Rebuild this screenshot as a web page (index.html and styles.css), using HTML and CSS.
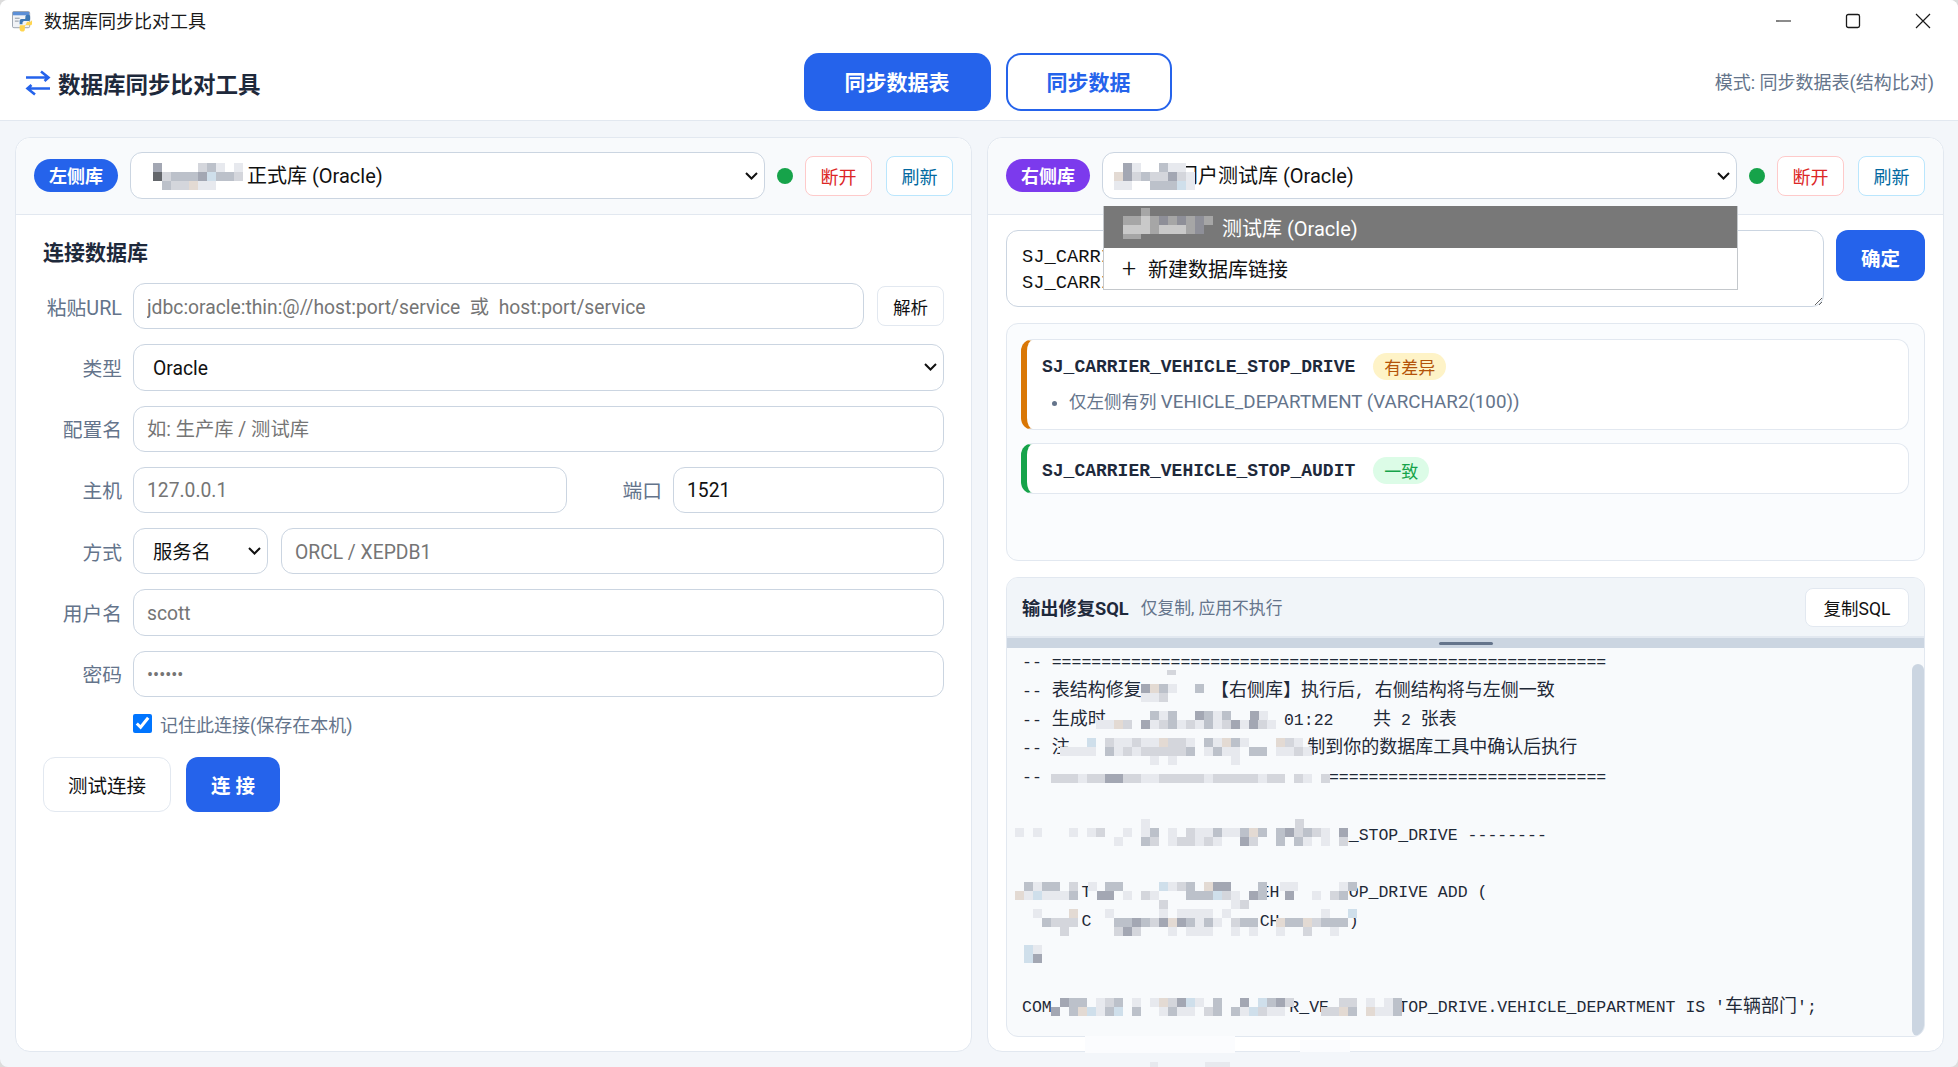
FILE: index.html
```html
<!DOCTYPE html>
<html lang="zh-CN">
<head>
<meta charset="utf-8">
<title>数据库同步比对工具</title>
<link rel="stylesheet" href="styles.css">
</head>
<body>
<div class="window">
  <div class="titlebar">
    <svg class="app-icon" viewBox="0 0 22 22" aria-hidden="true">
      <rect x="0.5" y="0.5" width="18" height="17" rx="1.5" fill="#f1f3f6" stroke="#9aa3ad"/>
      <rect x="1" y="1" width="17" height="3.5" fill="#5c8fd6"/>
      <rect x="3" y="7" width="5" height="1.2" fill="#9aa3ad"/>
      <rect x="3" y="10" width="4" height="1.2" fill="#9aa3ad"/>
      <path d="M8 14v-3.5c0-1.2.9-2 2-2h3c.8 0 1-.6 1-1.2V6c0-1.2 1-2 2.200-2h.6C18.600 4 19 5 19 6v2.600c0 1-.8 1.900-2 1.900h-4c-1.100 0-2 .8-2 2V14z" fill="#3d78b4"/>
      <path d="M21 9v4c0 1.300-.8 2-2 2h-4c-.8 0-1.500.5-1.500 1.300V19c0 1.600-1 2.500-2.200 2.500h-1c-1.300 0-2.300-1-2.300-2.300V16c0-.8.500-1.100 1.300-1.100H13c1.300 0 2-.9 2-2 0-1 1-1.700 2-1.700h2c1 0 2-1 2-2.200z" fill="#ffd54f"/>
    </svg>
    <span class="app-name">数据库同步比对工具</span>
    <div class="win-controls">
      <svg class="win-btn" viewBox="0 0 16 16" aria-hidden="true"><path d="M1 8h15" stroke="#1a1a1a" stroke-width="1.100" fill="none"/></svg>
      <svg class="win-btn" viewBox="0 0 16 16" aria-hidden="true"><rect x="1.500" y="1.500" width="13" height="13" rx="1.800" stroke="#1a1a1a" stroke-width="1.300" fill="none"/></svg>
      <svg class="win-btn" viewBox="0 0 16 16" aria-hidden="true"><path d="M1 1l14 14M15 1L1 15" stroke="#1a1a1a" stroke-width="1.200" fill="none"/></svg>
    </div>
  </div>

  <header class="topbar">
    <div class="brand">
      <svg class="brand-icon" viewBox="0 0 26 26" aria-hidden="true">
        <path d="M1 7.500h22M16 1.500l7.500 6-4 3.500M25 18.500H3M10 24.500l-7.500-6 4-3.500" stroke="#2563eb" stroke-width="2.600" fill="none"/>
      </svg>
      <span class="brand-name">数据库同步比对工具</span>
    </div>
    <nav class="tabs">
      <button class="tab tab-active">同步数据表</button>
      <button class="tab tab-idle">同步数据</button>
    </nav>
    <div class="mode">模式: 同步数据表(结构比对)</div>
  </header>

  <main class="panels">
    <section class="panel">
      <div class="panel-bar">
        <span class="side-badge side-left">左侧库</span>
        <div class="select-wrap">
          <select class="conn-select conn-left"><option>正式库 (Oracle)</option></select>
        </div>
        <span class="status-dot"></span>
        <button class="mini-btn btn-danger">断开</button>
        <button class="mini-btn btn-info">刷新</button>
      </div>
      <div class="panel-body form-body">
        <h2 class="form-title">连接数据库</h2>
        <div class="form-row">
          <label class="form-label">粘贴URL</label>
          <input class="field grow" placeholder="jdbc:oracle:thin:@//host:port/service  或  host:port/service">
          <button class="parse-btn">解析</button>
        </div>
        <div class="form-row">
          <label class="form-label">类型</label>
          <select class="field grow field-select"><option>Oracle</option></select>
        </div>
        <div class="form-row">
          <label class="form-label">配置名</label>
          <input class="field grow" placeholder="如: 生产库 / 测试库">
        </div>
        <div class="form-row">
          <label class="form-label">主机</label>
          <input class="field host" placeholder="127.0.0.1">
          <label class="port-label">端口</label>
          <input class="field grow" value="1521">
        </div>
        <div class="form-row">
          <label class="form-label">方式</label>
          <select class="field field-select method"><option>服务名</option></select>
          <input class="field grow" placeholder="ORCL / XEPDB1">
        </div>
        <div class="form-row">
          <label class="form-label">用户名</label>
          <input class="field grow" placeholder="scott">
        </div>
        <div class="form-row">
          <label class="form-label">密码</label>
          <input class="field grow pass" placeholder="••••••">
        </div>
        <label class="remember"><input type="checkbox" class="remember-box" checked><span>记住此连接(保存在本机)</span></label>
        <div class="form-actions">
          <button class="btn-test">测试连接</button>
          <button class="btn-connect">连 接</button>
        </div>
      </div>
    </section>

    <section class="panel">
      <div class="panel-bar">
        <span class="side-badge side-right">右侧库</span>
        <div class="select-wrap">
          <select class="conn-select conn-right"><option>门户测试库 (Oracle)</option></select>
          <div class="dropdown">
            <div class="dropdown-item dropdown-current">测试库 (Oracle)</div>
            <div class="dropdown-item"><span class="plus">+</span>新建数据库链接</div>
          </div>
        </div>
        <span class="status-dot"></span>
        <button class="mini-btn btn-danger">断开</button>
        <button class="mini-btn btn-info">刷新</button>
      </div>
      <div class="panel-body compare-body">
        <div class="table-input">
          <textarea class="tables" spellcheck="false">SJ_CARRIER_VEHICLE_STOP_DRIVE
SJ_CARRIER_VEHICLE_STOP_AUDIT</textarea>
          <button class="btn-confirm">确定</button>
        </div>
        <div class="results">
          <article class="result result-diff">
            <div class="result-head"><span class="result-name">SJ_CARRIER_VEHICLE_STOP_DRIVE</span><span class="tag tag-diff">有差异</span></div>
            <ul class="result-list"><li>仅左侧有列 <span class="result-latin">VEHICLE_DEPARTMENT (VARCHAR2(100))</span></li></ul>
          </article>
          <article class="result result-same">
            <div class="result-head"><span class="result-name">SJ_CARRIER_VEHICLE_STOP_AUDIT</span><span class="tag tag-same">一致</span></div>
          </article>
        </div>
        <div class="output">
          <div class="output-head">
            <strong class="output-title">输出修复SQL</strong>
            <span class="output-sub">仅复制, 应用不执行</span>
            <button class="btn-copy">复制SQL</button>
          </div>
          <div class="splitter"><span class="grip"></span></div>
          <div class="sql-wrap">
<pre class="sql">-- ========================================================
-- <span class="zh">表结构修复</span>       <span class="zh">【右侧库】执行后</span>, <span class="zh">右侧结构将与左侧一致</span>
-- <span class="zh">生成时</span>                  01:22    <span class="zh">共</span> 2 <span class="zh">张表</span>
-- <span class="zh">注</span>                        <span class="zh">制到你的数据库工具中确认后执行</span>
--                             ============================

                                 _STOP_DRIVE --------

      T                 EH       OP_DRIVE ADD (
      C                 CH       )


COM                        R_VE       TOP_DRIVE.VEHICLE_DEPARTMENT IS '<span class="zh">车辆部门</span>';</pre>
            <span class="sql-scroll"></span>
          </div>
        </div>
      </div>
    </section>
  </main>

  <svg class="mosaic" viewBox="0 0 1958 1067" aria-hidden="true" shape-rendering="crispEdges">
    <path fill="#fbfcfe" d="M1085 1036h150v17h-150zM1300 1040h50v12h-50z"/>
    <path fill="#e7e9ee" d="M1150 1062h8v5h-8zM1205 1062h25v5h-25zM1168 684h9v9h-9zM1141 693h18v9h-18zM1159 711h9v9h-9zM1213 711h9v9h-9zM1259 711h9v9h-9zM1096 720h18v9h-18zM1150 720h9v9h-9zM1177 720h9v9h-9zM1195 720h9v9h-9zM1213 720h9v9h-9zM1240 720h9v9h-9zM1267 720h9v9h-9zM1114 738h18v9h-18zM1141 738h18v9h-18zM1186 738h9v9h-9zM1213 738h9v9h-9zM1240 738h9v9h-9zM1294 738h9v9h-9zM1060 747h36v9h-36zM1114 747h9v9h-9zM1132 747h9v9h-9zM1204 747h9v9h-9zM1222 747h18v9h-18zM1276 747h18v9h-18zM1303 747h9v9h-9zM1150 756h9v9h-9zM1168 756h9v9h-9zM1231 756h9v9h-9zM1078 774h9v9h-9zM1141 774h18v9h-18zM1204 774h9v9h-9zM1258 774h9v9h-9zM1303 774h9v9h-9zM1141 819h9v9h-9zM1015 828h9v9h-9zM1033 828h9v9h-9zM1069 828h9v9h-9zM1087 828h9v9h-9zM1123 828h9v9h-9zM1141 828h9v9h-9zM1168 828h9v9h-9zM1195 828h18v9h-18zM1222 828h18v9h-18zM1321 828h9v9h-9zM1114 837h9v9h-9zM1168 837h9v9h-9zM1195 837h9v9h-9zM1213 837h9v9h-9zM1303 837h9v9h-9zM1321 837h9v9h-9zM1033 882h9v9h-9zM1088 882h9v9h-9zM1168 882h9v9h-9zM1280 882h18v9h-18zM1339 882h9v9h-9zM1024 891h9v9h-9zM1042 891h27v9h-27zM1123 891h9v9h-9zM1150 891h9v9h-9zM1231 891h9v9h-9zM1312 891h9v9h-9zM1231 900h9v9h-9zM1033 909h9v9h-9zM1105 909h9v9h-9zM1159 909h9v9h-9zM1177 909h36v9h-36zM1222 909h9v9h-9zM1321 909h9v9h-9zM1195 918h9v9h-9zM1213 918h9v9h-9zM1168 927h9v9h-9zM1186 927h27v9h-27zM1231 927h9v9h-9zM1249 927h9v9h-9zM1276 927h9v9h-9zM1330 927h9v9h-9zM1033 945h9v9h-9zM1096 998h9v9h-9zM1132 998h9v9h-9zM1150 998h9v9h-9zM1195 998h9v9h-9zM1366 998h9v9h-9zM1384 998h9v9h-9zM1096 1007h9v9h-9zM1159 1007h9v9h-9zM1177 1007h18v9h-18zM1240 1007h9v9h-9zM1267 1007h18v9h-18zM1375 1007h18v9h-18zM216 163h9v9h-9zM234 163h9v9h-9zM198 181h18v9h-18zM1132 163h9v9h-9zM1168 163h18v9h-18zM1186 172h9v9h-9zM1114 181h18v9h-18zM1186 181h9v9h-9z"/>
    <path fill="#d4d6dc" d="M1167 670h9v5h-9zM1159 693h9v9h-9zM1123 720h9v9h-9zM1159 720h9v9h-9zM1186 720h9v9h-9zM1222 720h9v9h-9zM1258 720h9v9h-9zM1105 738h9v9h-9zM1132 738h9v9h-9zM1168 738h18v9h-18zM1285 738h9v9h-9zM1123 747h9v9h-9zM1141 747h45v9h-45zM1294 747h9v9h-9zM1051 774h27v9h-27zM1087 774h18v9h-18zM1123 774h18v9h-18zM1159 774h45v9h-45zM1213 774h45v9h-45zM1267 774h18v9h-18zM1294 774h9v9h-9zM1321 774h9v9h-9zM1295 819h9v9h-9zM1096 828h9v9h-9zM1186 828h9v9h-9zM1294 828h9v9h-9zM1312 828h9v9h-9zM1150 837h9v9h-9zM1177 837h18v9h-18zM1204 837h9v9h-9zM1249 837h9v9h-9zM1339 837h9v9h-9zM1069 882h9v9h-9zM1177 882h9v9h-9zM1141 891h9v9h-9zM1222 891h9v9h-9zM1330 891h9v9h-9zM1159 900h9v9h-9zM1240 900h9v9h-9zM1051 918h27v9h-27zM1150 918h9v9h-9zM1231 918h9v9h-9zM1312 918h9v9h-9zM1060 927h9v9h-9zM1114 927h9v9h-9zM1132 927h9v9h-9zM1303 927h9v9h-9zM1105 998h9v9h-9zM1168 998h9v9h-9zM1285 998h9v9h-9zM1339 998h18v9h-18zM1204 1007h9v9h-9zM1258 1007h9v9h-9zM1321 1007h18v9h-18zM198 163h9v9h-9zM162 172h9v9h-9zM234 172h9v9h-9zM171 181h18v9h-18zM1132 172h9v9h-9zM1150 172h18v9h-18zM1177 172h9v9h-9z"/>
    <path fill="#bcc1ca" d="M1159 684h9v9h-9zM1195 684h9v9h-9zM1150 711h9v9h-9zM1168 711h9v9h-9zM1204 711h9v9h-9zM1222 711h9v9h-9zM1168 720h9v9h-9zM1204 720h9v9h-9zM1204 738h9v9h-9zM1231 738h9v9h-9zM1105 747h9v9h-9zM1186 747h9v9h-9zM1213 747h9v9h-9zM1249 747h18v9h-18zM1150 828h9v9h-9zM1213 828h9v9h-9zM1240 828h9v9h-9zM1258 828h9v9h-9zM1276 828h9v9h-9zM1303 828h9v9h-9zM1141 837h9v9h-9zM1276 837h9v9h-9zM1294 837h9v9h-9zM1024 882h9v9h-9zM1042 882h18v9h-18zM1105 882h18v9h-18zM1186 882h9v9h-9zM1258 882h9v9h-9zM1348 882h9v9h-9zM1069 891h9v9h-9zM1186 891h27v9h-27zM1258 891h9v9h-9zM1339 891h9v9h-9zM1042 918h9v9h-9zM1114 918h18v9h-18zM1141 918h9v9h-9zM1186 918h9v9h-9zM1204 918h9v9h-9zM1240 918h18v9h-18zM1285 918h18v9h-18zM1321 918h27v9h-27zM1069 998h18v9h-18zM1114 998h9v9h-9zM1213 998h9v9h-9zM1267 998h9v9h-9zM1393 998h9v9h-9zM1069 1007h9v9h-9zM1105 1007h9v9h-9zM1132 1007h9v9h-9zM1168 1007h9v9h-9zM1213 1007h9v9h-9zM1231 1007h9v9h-9zM1348 1007h9v9h-9zM1393 1007h9v9h-9zM207 163h9v9h-9zM171 172h27v9h-27zM216 172h18v9h-18zM162 181h9v9h-9zM1159 163h9v9h-9zM1141 172h9v9h-9zM1150 181h27v9h-27z"/>
    <path fill="#a3a7b3" d="M1141 684h9v9h-9zM1195 711h9v9h-9zM1250 711h9v9h-9zM1141 720h9v9h-9zM1231 720h9v9h-9zM1249 720h9v9h-9zM1105 774h18v9h-18zM1285 828h9v9h-9zM1339 828h9v9h-9zM1240 837h9v9h-9zM1213 882h18v9h-18zM1097 891h17v9h-17zM1249 891h9v9h-9zM1285 891h9v9h-9zM1132 918h9v9h-9zM1159 918h9v9h-9zM1177 918h9v9h-9zM1123 927h9v9h-9zM1033 954h9v9h-9zM1060 998h9v9h-9zM1177 998h9v9h-9zM1240 998h9v9h-9zM1276 998h9v9h-9zM1051 1007h9v9h-9zM153 163h9v9h-9zM198 172h9v9h-9zM1123 163h9v9h-9zM1123 172h9v9h-9zM1168 172h9v9h-9z"/>
    <path fill="#cfdfeb" d="M1087 738h9v9h-9zM1159 882h9v9h-9zM1033 891h9v9h-9zM1213 891h9v9h-9zM1348 909h9v9h-9zM1024 945h9v18h-9zM1186 998h9v9h-9zM1258 998h9v9h-9zM1087 1007h9v9h-9zM1114 1007h9v9h-9zM1249 1007h9v9h-9zM207 172h9v9h-9zM1177 181h9v9h-9z"/>
    <path fill="#e3dad3" d="M1150 684h9v9h-9zM1114 720h9v9h-9zM1159 738h9v9h-9zM1222 738h9v9h-9zM1276 738h9v9h-9zM1249 828h9v9h-9zM1204 882h9v9h-9zM1015 891h9v9h-9zM1069 909h9v9h-9zM1168 918h9v9h-9zM1276 918h9v9h-9zM1303 918h9v9h-9zM1159 998h9v9h-9zM1078 1007h9v9h-9zM1339 1007h9v9h-9zM1366 1007h9v9h-9zM189 181h9v9h-9zM1114 172h9v9h-9z"/>
    <path fill="#63666b" d="M153 172h9v9h-9z"/>
    <path fill="#a6a6a6" d="M1123 216h9v9h-9zM1132 216h9v9h-9zM1150 216h9v9h-9zM1168 216h9v9h-9zM1186 216h9v9h-9zM1204 216h9v9h-9zM1150 225h9v9h-9zM1186 225h9v9h-9zM1123 234h18v5h-18zM1141 208h9v8h-9z"/>
    <path fill="#c9c9c9" d="M1141 216h9v9h-9zM1123 225h27v9h-27zM1159 225h18v9h-18zM1177 225h9v9h-9z"/>
    <path fill="#8e8f98" d="M1159 216h9v9h-9zM1177 216h9v9h-9zM1195 216h9v9h-9zM1195 225h9v9h-9z"/>
  </svg>
</div>
</body>
</html>
```
FILE: styles.css
```css
* { box-sizing: border-box; }
html, body { margin: 0; height: 100%; }
body {
  background: #dcdcdc;
  font-family: Roboto, "Noto Sans CJK SC", sans-serif;
  color: #111827;
  overflow: hidden;
}
button, input, select, textarea { font-family: inherit; }
.window {
  position: relative;
  width: 1958px;
  height: 1067px;
  display: flex;
  flex-direction: column;
  background: #f3f6fa;
  border-radius: 8px;
  overflow: hidden;
}
.titlebar {
  height: 42px;
  background: #fff;
  display: flex;
  align-items: center;
  padding: 0 0 0 12px;
}
.app-icon { width: 21px; height: 21px; margin-right: 11px; }
.app-name { font-size: 18px; color: #1a1a1a; margin-top: -3px; }
.win-controls { margin-left: auto; display: flex; gap: 54px; padding-right: 27px; }
.win-btn { width: 16px; height: 16px; }
.topbar {
  height: 79px;
  background: #fff;
  border-bottom: 1px solid #e2e8f0;
  display: grid;
  grid-template-columns: 1fr auto 1fr;
  align-items: center;
  padding: 0 24px 0 25px;
}
.brand { display: flex; align-items: center; gap: 7px; padding-top: 4px; }
.brand-icon { width: 26px; height: 26px; }
.brand-name { font-size: 22.500px; font-weight: 700; color: #1e293b; }
.tabs { display: flex; gap: 15px; margin-left: 16px; padding-top: 2px; }
.tab {
  height: 58px;
  border-radius: 15px;
  font-size: 21px;
  font-weight: 700;
  padding-bottom: 3px;
}
.tab-active { width: 187px; background: #2563eb; color: #fff; border: 0; }
.tab-idle { width: 166px; background: #fff; color: #2563eb; border: 2px solid #2563eb; }
.mode { text-align: right; font-size: 18px; color: #64748b; padding-bottom: 1px; }
.panels {
  flex: 1;
  display: grid;
  grid-template-columns: 957px 957px;
  gap: 15px;
  padding: 16px 0 15px 15px;
  min-height: 0;
}
.panel {
  background: #fff;
  border: 1px solid #e2e8f0;
  border-radius: 15px;
  display: flex;
  flex-direction: column;
  min-height: 0;
}
.panel-bar {
  height: 77px;
  flex: none;
  background: #f8fafc;
  border-bottom: 1px solid #e2e8f0;
  border-radius: 15px 15px 0 0;
  display: flex;
  align-items: center;
  padding: 0 18px 1px;
  gap: 12px;
}
.side-badge {
  flex: none;
  height: 33px;
  width: 84px;
  border-radius: 17px;
  color: #fff;
  font-weight: 700;
  font-size: 18px;
  padding-bottom: 2px;
  display: flex;
  align-items: center;
  justify-content: center;
}
.side-left { background: #2563eb; }
.side-right { background: #7c3aed; }
.select-wrap { position: relative; flex: 1; min-width: 0; }
.conn-select, .field-select {
  appearance: none;
  background-color: #fff;
  background-image: url("data:image/svg+xml,%3Csvg xmlns='http://www.w3.org/2000/svg' width='13' height='8'%3E%3Cpath d='M1 1l5.500 5.500L12 1' fill='none' stroke='%23111' stroke-width='2'/%3E%3C/svg%3E");
  background-repeat: no-repeat;
  background-position: right 6px center;
}
.conn-select {
  display: block;
  width: 100%;
  height: 47px;
  border: 1px solid #cbd5e1;
  border-radius: 12px;
  font-size: 20px;
  color: #111;
}
.conn-left { padding: 0 24px 0 116px; }
.conn-right { padding: 0 24px 0 75px; }
.dropdown {
  position: absolute;
  top: 54px;
  left: 1px;
  right: -1px;
  background: #fff;
  border: 1px solid #c4c8cc;
  border-top: 0;
  z-index: 2;
  font-size: 20px;
  color: #111;
}
.dropdown-item { height: 41px; display: flex; align-items: center; padding-left: 18px; }
.dropdown-current { background: #787878; color: #fff; height: 42px; padding-left: 118px; }
.plus { font-size: 25px; width: 26px; line-height: 1; font-weight: 300; }
.status-dot { width: 16px; height: 16px; border-radius: 50%; background: #16a34a; flex: none; }
.mini-btn {
  flex: none;
  width: 67px;
  height: 40px;
  border-radius: 8px;
  background: #fff;
  font-size: 18px;
  margin-top: 1px;
}
.mini-btn + .mini-btn { margin-left: 2px; }
.btn-danger { border: 1px solid #fecaca; color: #dc2626; }
.btn-info { border: 1px solid #bae6fd; color: #0369a1; }
.panel-body { flex: 1; min-height: 0; }

.form-body { padding: 23px 27px 0 27px; display: flex; flex-direction: column; }
.form-title { margin: 0 0 15px; font-size: 21px; line-height: 30px; font-weight: 700; color: #1e293b; }
.form-row { display: flex; align-items: center; gap: 13px; height: 46.250px; margin-bottom: 15px; }
.form-label { flex: none; width: 79px; text-align: right; font-size: 19.800px; color: #64748b; margin-right: -2px; white-space: nowrap; }
.field {
  height: 46.250px;
  border: 1px solid #cbd5e1;
  border-radius: 12px;
  background-color: #fff;
  padding: 2px 13px 0;
  font-size: 19.300px;
  color: #111;
  min-width: 0;
}
.field::placeholder { color: #757575; opacity: 1; }
.grow { flex: 1; }
.field-select { padding: 2px 24px 0 19px; }
.host { width: 434px; flex: none; }
.port-label { flex: none; width: 82px; text-align: right; font-size: 19.800px; color: #64748b; margin: 0 -2px 0 0; }
.method { width: 135px; flex: none; }
.pass::placeholder { font-size: 18px; }
.parse-btn {
  flex: none;
  width: 67px;
  height: 40px;
  border: 1px solid #e2e8f0;
  border-radius: 8px;
  background: #fff;
  font-size: 17.500px;
  color: #111;
}
.remember { display: flex; align-items: center; gap: 8px; margin: 1px 0 22px 90px; font-size: 18px; color: #64748b; height: 22px; }
.remember-box { width: 19px; height: 19px; margin: 0; accent-color: #0075ff; }
.form-actions { display: flex; gap: 15px; }
.btn-test, .btn-connect { height: 55px; border-radius: 12px; font-size: 19.500px; }
.btn-test { width: 128px; background: #fff; border: 1px solid #e2e8f0; color: #111; }
.btn-connect { width: 94px; background: #2563eb; border: 0; color: #fff; font-weight: 700; }

.compare-body { padding: 15px 18px 14px; display: flex; flex-direction: column; gap: 16px; }
.table-input { display: flex; gap: 12px; align-items: flex-start; flex: none; }
.tables {
  flex: 1;
  height: 77px;
  border: 1px solid #cbd5e1;
  border-radius: 12px;
  padding: 14px 15px;
  font-family: "Liberation Mono", monospace;
  font-size: 18.750px;
  line-height: 25.700px;
  color: #111;
  background: #fff;
  overflow: hidden;
  white-space: pre;
}
.btn-confirm { flex: none; width: 89px; height: 51px; padding-top: 4px; background: #2563eb; color: #fff; border: 0; border-radius: 12px; font-size: 19.500px; font-weight: 700; }
.results {
  flex: none;
  height: 238px;
  background: #fafcfe;
  border: 1px solid #e2e8f0;
  border-radius: 12px;
  padding: 15px 15px 0 14px;
  display: flex;
  flex-direction: column;
  gap: 13px;
}
.result { background: #fff; border: 1px solid #e2e8f0; border-radius: 12px; padding: 13px 14px 0 15px; }
.result-diff { height: 91px; border-left: 6px solid #d97706; }
.result-same { height: 51px; border-left: 6px solid #16a34a; padding-top: 13px; }
.result-head { display: flex; align-items: center; gap: 18px; height: 27px; }
.result-name { font-family: "Liberation Mono", monospace; font-weight: 700; font-size: 18px; color: #1e293b; }
.tag { height: 27px; border-radius: 14px; padding: 0 11px; font-size: 17px; display: flex; align-items: center; }
.tag-diff { background: #fef3c7; color: #b45309; }
.tag-same { background: #dcfce7; color: #16a34a; }
.result-list { margin: 9px 0 0; padding: 0 0 0 27px; font-size: 17.500px; line-height: 26px; color: #64748b; }
.result-latin { font-size: 18.750px; }
.output {
  flex: 1;
  min-height: 0;
  border: 1px solid #e2e8f0;
  border-radius: 12px;
  background: #f8fafc;
  display: flex;
  flex-direction: column;
  overflow: hidden;
}
.output-head {
  height: 58px;
  flex: none;
  background: #f1f5f9;
  display: flex;
  align-items: center;
  padding: 0 15px;
  gap: 12px;
}
.output-title { font-size: 18.250px; color: #1e293b; }
.output-sub { font-size: 16.800px; color: #64748b; }
.btn-copy {
  margin-left: auto;
  width: 104px;
  height: 39px;
  border: 1px solid #e2e8f0;
  border-radius: 8px;
  background: #fff;
  font-size: 17.500px;
  color: #111;
}
.splitter {
  flex: none;
  height: 12px;
  border-top: 2px solid #e2e8f0;
  background: #cbd5e1;
  display: flex;
  align-items: center;
  justify-content: center;
}
.grip { width: 54px; height: 3px; border-radius: 2px; background: #64748b; }
.sql-wrap { position: relative; flex: 1; min-height: 0; overflow: hidden; }
.sql {
  margin: 0;
  padding: 1px 15px 0;
  font-family: "Liberation Mono", monospace;
  font-size: 16.500px;
  line-height: 28.750px;
  color: #1f2937;
}
.zh { font-family: "Noto Sans CJK SC", sans-serif; font-size: 18px; line-height: 1; }
.sql-scroll { position: absolute; top: 16px; right: 0; bottom: 0; width: 12px; border-radius: 6px; background: #cbd5e1; }
.mosaic { position: absolute; top: 0; left: 0; width: 1958px; height: 1067px; pointer-events: none; z-index: 3; }
```
